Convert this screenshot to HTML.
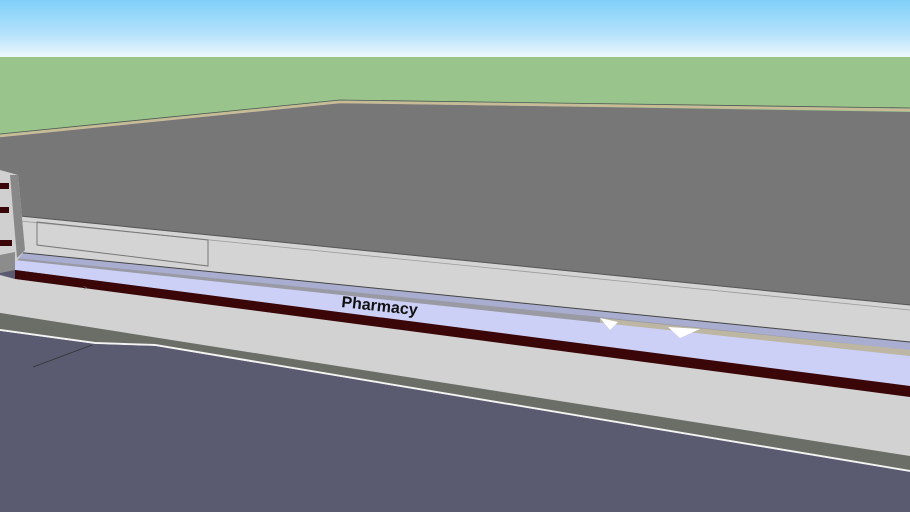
<!DOCTYPE html>
<html><head><meta charset="utf-8"><style>
html,body{margin:0;padding:0;width:910px;height:512px;overflow:hidden;background:#5a5b70}
svg{display:block}
</style></head><body>
<svg width="910" height="512" viewBox="0 0 910 512" xmlns="http://www.w3.org/2000/svg">
<defs>
<linearGradient id="sky" x1="0" y1="0" x2="0" y2="1">
<stop offset="0" stop-color="#7fd0fa"/><stop offset="0.6" stop-color="#b5e2fb"/><stop offset="1" stop-color="#eef8fd"/>
</linearGradient>
</defs>
<rect x="0" y="0" width="910" height="57" fill="url(#sky)"/>
<rect x="0" y="57" width="910" height="200" fill="#99c48b"/>
<polygon points="0,137 340,103 910,112 910,306 20,217 0,215" fill="#777777"/>
<polyline points="0,136 340,102 910,110" fill="none" stroke="#c9bb98" stroke-width="2.5"/>
<polyline points="0,134 340,100 910,108" fill="none" stroke="#555" stroke-width="0.8"/>
<polygon points="0,214 910,305 910,355 0,255" fill="#d4d4d4"/>
<line x1="0" y1="214" x2="910" y2="305" stroke="#555" stroke-width="1"/>
<line x1="0" y1="219" x2="910" y2="310" stroke="#999" stroke-width="0.8"/>
<polygon points="37,222 208,240 208,266 37,245" fill="none" stroke="#777" stroke-width="1"/>
<polygon points="15,252 910,342 910,360 15,260" fill="#a9aed0"/>
<line x1="15" y1="252" x2="910" y2="342" stroke="#444" stroke-width="1"/>
<polygon points="600,318 910,350 910,356 600,324" fill="#efe6cc"/>
<polygon points="15,258 600,317 910,350 910,363 15,261" fill="#8a8578" opacity="0.5"/>
<polygon points="15,260 910,356 910,387 15,270" fill="#cdd0f6"/>
<polygon points="600,318 610,330 618,322" fill="#fff"/>
<polygon points="668,327 680,338 700,329" fill="#fff"/>
<polygon points="15,270 910,386 910,398 15,279" fill="#3a0608"/>
<polygon points="0,275 15,279 910,397 910,458 0,313" fill="#d2d2d2"/>
<polygon points="0,313 910,456 910,470 0,330" fill="#6b6e66"/>
<polyline points="0,330 95,343 155,345 910,471" fill="none" stroke="#f4f4f4" stroke-width="2"/>
<polygon points="0,331 95,344 155,346 910,472 910,512 0,512" fill="#5a5b70"/>
<line x1="33" y1="367" x2="92" y2="345" stroke="#333" stroke-width="0.8"/>
<polygon points="0,170 18,175 25,250 16,262 0,262" fill="#d0d0d0"/>
<polygon points="10,175 18,175 25,250 17,258" fill="#888"/>
<rect x="0" y="183" width="9" height="6" fill="#3a0608"/>
<rect x="0" y="207" width="9" height="6" fill="#3a0608"/>
<rect x="0" y="240" width="12" height="6" fill="#3a0608"/>
<polygon points="0,255 15,252 15,270 0,273" fill="#8c8c8c"/>
<text x="0" y="0" transform="translate(341,307) rotate(6.2)" font-family="Liberation Sans, sans-serif" font-weight="bold" font-size="16" fill="#111">Pharmacy</text>
<text x="0" y="0" transform="translate(83,290) rotate(6)" font-family="Liberation Sans, sans-serif" font-size="7" fill="#777">&gt;</text>
</svg>
</body></html>
